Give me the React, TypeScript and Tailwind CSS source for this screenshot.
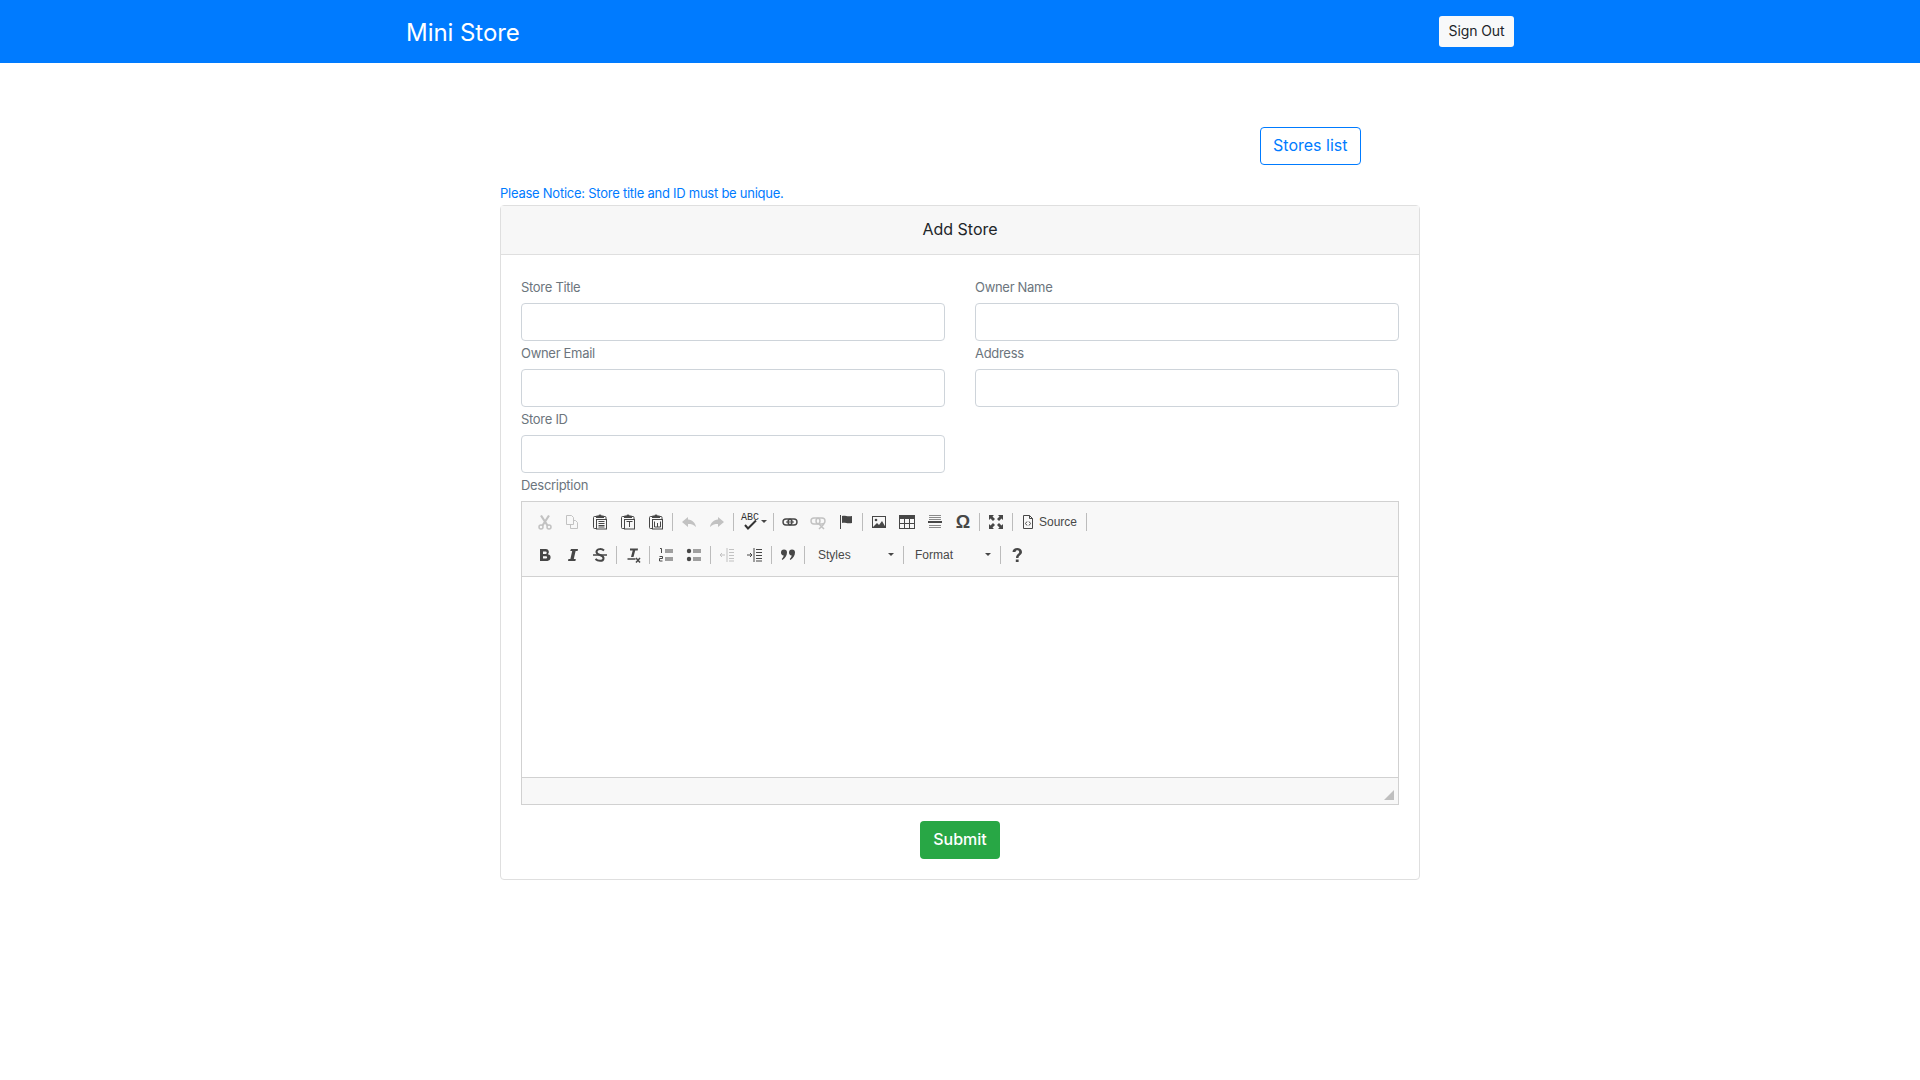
import type { ReactNode } from "react";

const FONT = "font-['Inter','Liberation_Sans',sans-serif]";

function Ico({ children, faded }: { children: ReactNode; faded?: boolean }) {
  return (
    <svg
      width="16"
      height="16"
      viewBox="0 0 16 16"
      fill="none"
      stroke="#474747"
      strokeWidth="1"
      className={faded ? "opacity-30" : ""}
    >
      {children}
    </svg>
  );
}

function Btn({ w = "w-[28px]", children }: { w?: string; children: ReactNode }) {
  return <div className={`${w} h-[24px] flex items-center justify-center shrink-0`}>{children}</div>;
}

function Sep() {
  return (
    <div className="w-[5px] h-[18px] flex justify-center shrink-0">
      <div className="w-px h-full bg-[#bcbcbc]" />
    </div>
  );
}

function Caret() {
  return <div className="w-0 h-0 border-x-[3px] border-x-transparent border-t-[3px] border-t-[#474747]" />;
}

// clipboard outline shared by the three paste buttons
const board = (
  <>
    <path d="M4 2.500H2.500a1 1 0 0 0-1 1v10a1 1 0 0 0 1 1H4" />
    <path d="M4 2.500a1 1 0 0 1 1-1h1.500a1.500 1 0 0 1 3 0H11a1 1 0 0 1 1 1V4H4z" fill="#474747" stroke="none" />
    <path d="M12 2.500h1a1 1 0 0 1 1 1V5" />
    <rect x="4.500" y="5.500" width="10" height="9.500" />
  </>
);

function TopRow() {
  return (
    <div className="h-[33px] flex items-center pl-[9px]">
      <Btn>
        <Ico faded>
          <circle cx="4" cy="13" r="2" strokeWidth="1.5" />
          <circle cx="12" cy="13" r="2" strokeWidth="1.5" />
          <path d="M4 1.500l6.500 10M12 1.500l-6.500 10" strokeWidth="2.200" />
        </Ico>
      </Btn>
      <Btn w="w-[26px]">
        <Ico faded>
          <path d="M2.500 1.500h5l2 2v7h-7zM9.500 6.500h2l2 2v6h-7v-4" />
        </Ico>
      </Btn>
      <Btn w="w-[29px]">
        <Ico>
          {board}
          <path d="M6.500 7.500h6M6.500 9.500h6M6.500 11.500h6M6.500 13h6" />
        </Ico>
      </Btn>
      <Btn>
        <Ico>
          {board}
          <path d="M6.500 7.500h6M9.500 7.500v5.500" />
        </Ico>
      </Btn>
      <Btn>
        <Ico>
          {board}
          <path d="M6.500 7.500v5.500h6V7.500M9.500 9v4" />
        </Ico>
      </Btn>
      <Sep />
      <Btn>
        <Ico faded>
          <path d="M7 3L1 8l6 5v-3c3 0 5.500.5 8 3-.5-4-3.500-7-8-7.500z" fill="#474747" stroke="none" />
        </Ico>
      </Btn>
      <Btn>
        <Ico faded>
          <path d="M9 3l6 5-6 5v-3c-3 0-5.500.5-8 3 .5-4 3.500-7 8-7.500z" fill="#474747" stroke="none" />
        </Ico>
      </Btn>
      <Sep />
      <div className="w-[35px] h-[24px] flex items-center shrink-0 pl-[5px] gap-[2px]">
        <div className="relative w-[18px] h-[16px]">
          <span className="absolute left-0 -top-[1px] text-[10px] leading-[10px] font-['Liberation_Mono',monospace] text-[#333]">ABC</span>
          <svg width="18" height="16" viewBox="0 0 18 16" className="absolute inset-0" fill="none">
            <path d="M4 11l3 3.500 8-8" stroke="#333" strokeWidth="2" />
          </svg>
        </div>
        <Caret />
      </div>
      <Sep />
      <Btn>
        <Ico>
          <rect x="1" y="5" width="9" height="6" rx="3" strokeWidth="1.400" />
          <rect x="6" y="5" width="9" height="6" rx="3" strokeWidth="1.400" />
          <path d="M4 8h8" />
        </Ico>
      </Btn>
      <Btn>
        <Ico faded>
          <rect x="1" y="4" width="9" height="6" rx="3" strokeWidth="1.400" />
          <rect x="6" y="4" width="9" height="6" rx="3" strokeWidth="1.400" />
          <path d="M9 10l5 5M14 10l-5 5" strokeWidth="1.500" />
        </Ico>
      </Btn>
      <Btn>
        <Ico>
          <path d="M2.500 1v14" />
          <path d="M4 2c3-1 5 1 10 0v7c-5 1-7-1-10 0z" fill="#474747" stroke="none" />
        </Ico>
      </Btn>
      <Sep />
      <Btn>
        <Ico>
          <rect x="1.500" y="2.500" width="13" height="11" />
          <circle cx="5" cy="6" r="1.300" fill="#474747" stroke="none" />
          <path d="M2 13l4-4 2 2 3-4 3.500 6z" fill="#474747" stroke="none" />
        </Ico>
      </Btn>
      <Btn>
        <Ico>
          <rect x="0.500" y="1.500" width="15" height="13" />
          <path d="M1 3.500h14" strokeWidth="3" />
          <path d="M5.500 5v9M10.500 5v9M1 9.500h14" />
        </Ico>
      </Btn>
      <Btn>
        <Ico>
          <path d="M2 1.500h12M2 3.500h12M2 5.500h12M2 11.500h12M2 13.500h12" stroke="#8a8a8a" />
          <path d="M1 8h14" strokeWidth="2" />
        </Ico>
      </Btn>
      <Btn>
        <span className="text-[18px] leading-none font-['Liberation_Sans',sans-serif] font-bold text-[#474747]">Ω</span>
      </Btn>
      <Sep />
      <Btn>
        <Ico>
          <path d="M1 1h5L4.500 2.500 7 5 5 7 2.500 4.500 1 6zM15 1h-5l1.500 1.500L9 5l2 2 2.500-2.500L15 6zM1 15h5l-1.500-1.500L7 11 5 9l-2.500 2.500L1 10zM15 15h-5l1.500-1.500L9 11l2-2 2.500 2.500L15 10z" fill="#474747" stroke="none" />
        </Ico>
      </Btn>
      <Sep />
      <div className="w-[69px] h-[24px] flex items-center shrink-0 pl-[5px] gap-[3px]">
        <Ico>
          <path d="M3.500 1.500h6l3 3v10h-9zM9.500 1.500v3h3" />
          <path d="M7 7.500L5.500 9.500 7 11.500M9 7.500l1.500 2-1.500 2" />
        </Ico>
        <span className="text-[12px] leading-none font-['Liberation_Sans',sans-serif] text-[#484848]">Source</span>
      </div>
      <Sep />
    </div>
  );
}

function Combo({ w, pad, label }: { w: string; pad: string; label: string }) {
  return (
    <div className={`${w} ${pad} h-[24px] flex items-center justify-between shrink-0 pr-[7px]`}>
      <span className="text-[12px] font-['Liberation_Sans',sans-serif] text-[#484848]">{label}</span>
      <Caret />
    </div>
  );
}

function BottomRow() {
  return (
    <div className="h-[33px] flex items-center pl-[9px]">
      <Btn>
        <Ico>
          <path d="M3 2h6a3 3 0 0 1 1.800 5.300A3.300 3.300 0 0 1 9.500 14H3zM6 4.500V7h2.500a1.200 1.200 0 0 0 0-2.500zM6 9.300V11.600h3a1.150 1.150 0 0 0 0-2.300z" fill="#474747" fillRule="evenodd" stroke="none" />
        </Ico>
      </Btn>
      <Btn w="w-[27px]">
        <Ico>
          <path d="M6 2h7l-.4 2h-2L8.800 12h2l-.4 2H3l.4-2h2L7.200 4h-2z" fill="#474747" stroke="none" />
        </Ico>
      </Btn>
      <Btn>
        <Ico>
          <path d="M12 3.500C10 1.500 5 1.500 4.500 4.500c-.3 2 2 3 3.500 3.500 2 .7 4 1.500 3.500 3.700C11 14.500 6 14.500 3.500 12" strokeWidth="2" />
          <path d="M1 8h14" strokeWidth="1.500" />
        </Ico>
      </Btn>
      <Sep />
      <Btn>
        <Ico>
          <path d="M5 1.500h8l-.3 2h-2.500L8.500 10h-2.500L7.700 3.500H5z" fill="#474747" stroke="none" />
          <path d="M2.500 12h8" strokeWidth="1.500" />
          <path d="M11 11l4 4.500M15 11l-4 4.500" strokeWidth="1.500" />
        </Ico>
      </Btn>
      <Sep />
      <Btn>
        <Ico>
          <path d="M7 3h8M7 5h8M7 11h8M7 13h8" />
          <path d="M2 1.500h1.500V6M1.500 9.500h3v2h-3v2.500h3" strokeWidth="1" />
        </Ico>
      </Btn>
      <Btn>
        <Ico>
          <circle cx="3" cy="4" r="2.200" fill="#474747" stroke="none" />
          <circle cx="3" cy="12" r="2.200" fill="#474747" stroke="none" />
          <path d="M7 3h8M7 5h8M7 11h8M7 13h8" />
        </Ico>
      </Btn>
      <Sep />
      <Btn>
        <Ico faded>
          <path d="M8 1v14M10 2.500h5M10 5.500h5M10 8.500h5M10 11.500h5M10 14h5" />
          <path d="M1 8h5M3 6L1 8l2 2" />
        </Ico>
      </Btn>
      <Btn>
        <Ico>
          <path d="M7 1v14M9 2.500h6M9 5.500h6M9 8.500h6M9 11.500h6M9 14h6" />
          <path d="M0 8h5M3 6l2 2-2 2" />
        </Ico>
      </Btn>
      <Sep />
      <Btn>
        <Ico>
          <path d="M1 5.500a3 3 0 1 1 6 0c0 3.500-2 5.500-4.500 7.500l-.8-1c1-1 1.800-2 2-3.500A3 3 0 0 1 1 5.500zM9 5.500a3 3 0 1 1 6 0c0 3.500-2 5.500-4.500 7.500l-.8-1c1-1 1.800-2 2-3.500A3 3 0 0 1 9 5.500z" fill="#474747" stroke="none" />
        </Ico>
      </Btn>
      <Sep />
      <Combo w="w-[94px]" pad="pl-[11px]" label="Styles" />
      <Sep />
      <Combo w="w-[92px]" pad="pl-[9px]" label="Format" />
      <Sep />
      <Btn>
        <Ico>
          <path d="M3.500 5c0-5.500 9.500-5.500 9.500 0 0 3-3.500 3.200-3.500 6H7c0-4 3.200-3.700 3.200-6 0-2.300-3.700-2.300-3.700 0z" fill="#474747" stroke="none" />
          <rect x="6.800" y="12.500" width="2.800" height="2.500" fill="#474747" stroke="none" />
        </Ico>
      </Btn>
    </div>
  );
}

const LABEL = "block h-[28px] pt-[2px] text-[13px] leading-[21px] tracking-[-0.3px] text-[#6c757d]";

function Field({ label }: { label: string }) {
  return (
    <div className="h-[66px]">
      <label className={LABEL}>{label}</label>
      <input className="block w-full h-[38px] bg-white border border-[#ced4da] rounded-[4px]" />
    </div>
  );
}

export default function App() {
  return (
    <div className={`min-h-screen bg-white ${FONT}`}>
      <nav className="h-[63px] bg-[#007bff]">
        <div className="w-[1140px] mx-auto px-[16px] h-full flex items-start justify-between">
          <span className="mt-[16px] text-[24px] leading-[34px] tracking-[-0.05px] text-white">Mini Store</span>
          <button className="mt-[16px] h-[31px] px-[9.500px] pb-[1px] bg-[#f8f9fa] rounded-[3px] text-[14px] leading-none tracking-[-0.1px] text-[#212529]">
            Sign Out
          </button>
        </div>
      </nav>

      <main className="w-[920px] mx-auto">
        <div className="pt-[64px] flex justify-end pr-[59px]">
          <button className="h-[38px] px-[12.500px] pb-[2px] border border-[#007bff] rounded-[4px] text-[16px] text-[#007bff]">
            Stores list
          </button>
        </div>
        <p className="mt-[17px] mb-[1px] text-[13px] leading-[22px] tracking-[-0.25px] text-[#007bff]">
          Please Notice: Store title and ID must be unique.
        </p>

        <div className="border border-[#dfdfdf] rounded-[4px] bg-white">
          <div className="h-[49px] pb-[2px] flex items-center justify-center bg-[#f7f7f7] border-b border-[#dfdfdf] text-[16px] text-[#212529]">
            Add Store
          </div>
          <div className="px-[20px] pt-[20px] pb-[20px]">
            <div className="grid grid-cols-2 gap-x-[30px]">
              <Field label="Store Title" />
              <Field label="Owner Name" />
              <Field label="Owner Email" />
              <Field label="Address" />
              <Field label="Store ID" />
              <div />
            </div>
            <div className={LABEL}>Description</div>
            <div className="border border-[#d1d1d1]">
              <div className="h-[75px] pt-[3px] bg-[#f8f8f8] border-b border-[#d1d1d1]">
                <TopRow />
                <BottomRow />
              </div>
              <div className="h-[200px] bg-white" />
              <div className="relative h-[27px] bg-[#f8f8f8] border-t border-[#d1d1d1]">
                <div className="absolute right-[4px] bottom-[4px] w-0 h-0 border-l-[10px] border-l-transparent border-b-[10px] border-b-[#bfbfbf]" />
              </div>
            </div>
            <div className="flex justify-center mt-[16px]">
              <button className="h-[38px] px-[13px] pb-[2px] bg-[#28a745] rounded-[4px] text-[16px] font-medium text-white">Submit</button>
            </div>
          </div>
        </div>
      </main>
    </div>
  );
}
